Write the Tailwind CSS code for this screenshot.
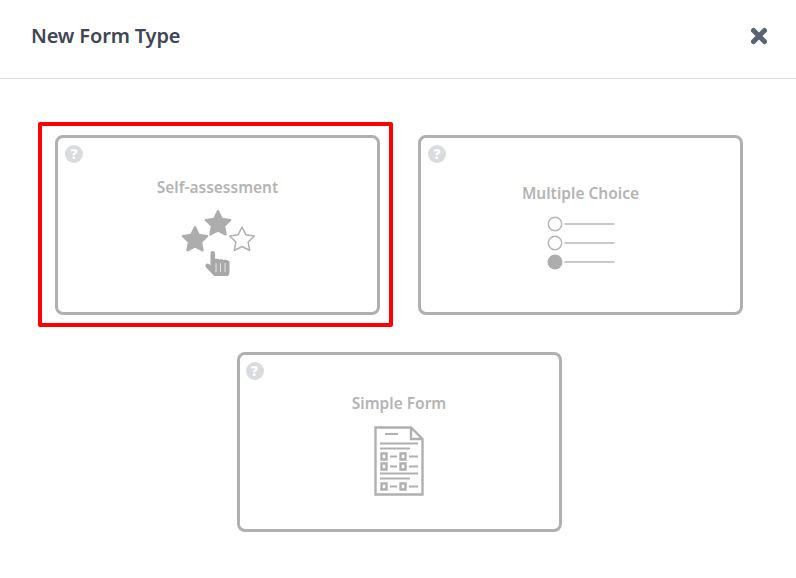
<!DOCTYPE html>
<html lang="en">
<head>
  <meta charset="UTF-8" />
  <title>New Form Type</title>
  <script src="https://cdn.jsdelivr.net/npm/@tailwindcss/browser@4"></script>
</head>
<body class="bg-white font-['Noto_Sans',sans-serif]">
  <div class="relative w-[796px] h-[578px] overflow-hidden">
    <header class="h-[79px] border-b border-[#dddddd] flex items-center justify-between pl-[31px] pr-[28px]">
      <h1 class="text-[20px] font-semibold tracking-[-0.15px] text-[#3f4654] -mt-[6px]">New Form Type</h1>
      <button class="-mt-[6px]">
        <svg width="18" height="18" viewBox="0 0 18 18"><path d="M3.5 3.5 14.5 14.5M14.5 3.5 3.5 14.5" stroke="#5c6370" stroke-width="5" stroke-linecap="round" /></svg>
      </button>
    </header>

    <main class="flex flex-wrap justify-center gap-x-[38px] gap-y-[37px] pt-[56px] pl-[55px] pr-[53px]">
      <div class="relative w-[325px] h-[180px] border-[3px] border-[#b0b0b0] rounded-[8px] flex flex-col items-center pt-[38px]">
        <span class="absolute left-[7px] top-[7px] w-[18px] h-[18px] rounded-full bg-[#d9dbde] text-white text-[14px] leading-[18px] font-black text-center">?</span>
        <h2 class="text-[15.5px] leading-[22px] font-semibold text-[#b4b4b4]">Self-assessment</h2>
        <svg class="mt-[7px]" width="90" height="75" viewBox="0 0 90 75">
          <g fill="#adadad" stroke="#adadad" stroke-width="2" stroke-linejoin="round">
            <polygon transform="translate(22 35) scale(1.08)" points="0,-12 3.5,-4.9 11.4,-3.7 5.7,1.9 7.1,9.7 0,6 -7.1,9.7 -5.7,1.9 -11.4,-3.7 -3.5,-4.9" />
            <polygon transform="translate(45 19) scale(1.08)" points="0,-12 3.5,-4.9 11.4,-3.7 5.7,1.9 7.1,9.7 0,6 -7.1,9.7 -5.7,1.9 -11.4,-3.7 -3.5,-4.9" />
          </g>
          <polygon transform="translate(69 35) scale(1.08)" fill="none" stroke="#b0b0b0" stroke-width="1.4" stroke-linejoin="round" points="0,-12 3.5,-4.9 11.4,-3.7 5.7,1.9 7.1,9.7 0,6 -7.1,9.7 -5.7,1.9 -11.4,-3.7 -3.5,-4.9" />
          <path d="M37.5 48C37.5 45.3 42 45.3 42 48V54C44 53.5 46 54 46.5 54.5C48 53.8 50 54.5 50.5 55C52 54.5 55 55 56.5 56.5V66C56.5 68 56 70 55 71H41C39 68 35 65 32.8 62C31.5 59.5 34 57.5 36 59L37.5 60.5Z" fill="#a8a8a8" />
          <path d="M43 58V67M47.5 58V67M52 58V67" stroke="#ffffff" stroke-width="0.7" />
        </svg>
      </div>

      <div class="relative w-[325px] h-[180px] border-[3px] border-[#b0b0b0] rounded-[8px] flex flex-col items-center pt-[44px]">
        <span class="absolute left-[7px] top-[7px] w-[18px] h-[18px] rounded-full bg-[#d9dbde] text-white text-[14px] leading-[18px] font-black text-center">?</span>
        <h2 class="text-[15.5px] leading-[22px] font-semibold text-[#b4b4b4]">Multiple Choice</h2>
        <svg class="mt-[12px]" width="70" height="54" viewBox="0 0 70 54">
          <circle cx="9" cy="8" r="6.7" fill="none" stroke="#b4b4b4" stroke-width="1.4" />
          <circle cx="9" cy="27" r="6.7" fill="none" stroke="#b4b4b4" stroke-width="1.4" />
          <circle cx="9" cy="46" r="7.5" fill="#adadad" />
          <path d="M18.5 8H68.5M18.5 27H68.5M18.5 46H68.5" stroke="#b8b8b8" stroke-width="1.4" />
        </svg>
      </div>

      <div class="relative w-[325px] h-[180px] border-[3px] border-[#b0b0b0] rounded-[8px] flex flex-col items-center pt-[37px]">
        <span class="absolute left-[6px] top-[7px] w-[18px] h-[18px] rounded-full bg-[#d9dbde] text-white text-[14px] leading-[18px] font-black text-center">?</span>
        <h2 class="text-[15.5px] leading-[22px] font-semibold text-[#b4b4b4]">Simple Form</h2>
        <svg class="mt-[12px]" width="50" height="70" viewBox="0 0 50 70">
          <g fill="none" stroke="#b0b0b0">
            <path d="M37 1.5H1.5V68.5H48.5V13Z M37 1.5V13H48.5" stroke-width="2.4" />
            <path d="M11 8H24M6 17.5H44M6 22.5H36M16 30.5H23M35 30.5H44M16 40.5H23M35 40.5H44M6 47.5H44M6 52.5H36M16 60.5H23M35 60.5H44" stroke-width="2" />
            <path d="M7.5 27.5h5v6h-5ZM26.5 27.5h5v6h-5ZM7.5 37.5h5v6h-5ZM26.5 37.5h5v6h-5ZM7.5 57.5h5v6h-5ZM26.5 57.5h5v6h-5Z" stroke-width="2.4" />
          </g>
        </svg>
      </div>
    </main>

    <div class="absolute left-[38px] top-[122px] w-[355px] h-[205px] border-4 border-[#ff0000] rounded-[2px]"></div>
  </div>
</body>
</html>
